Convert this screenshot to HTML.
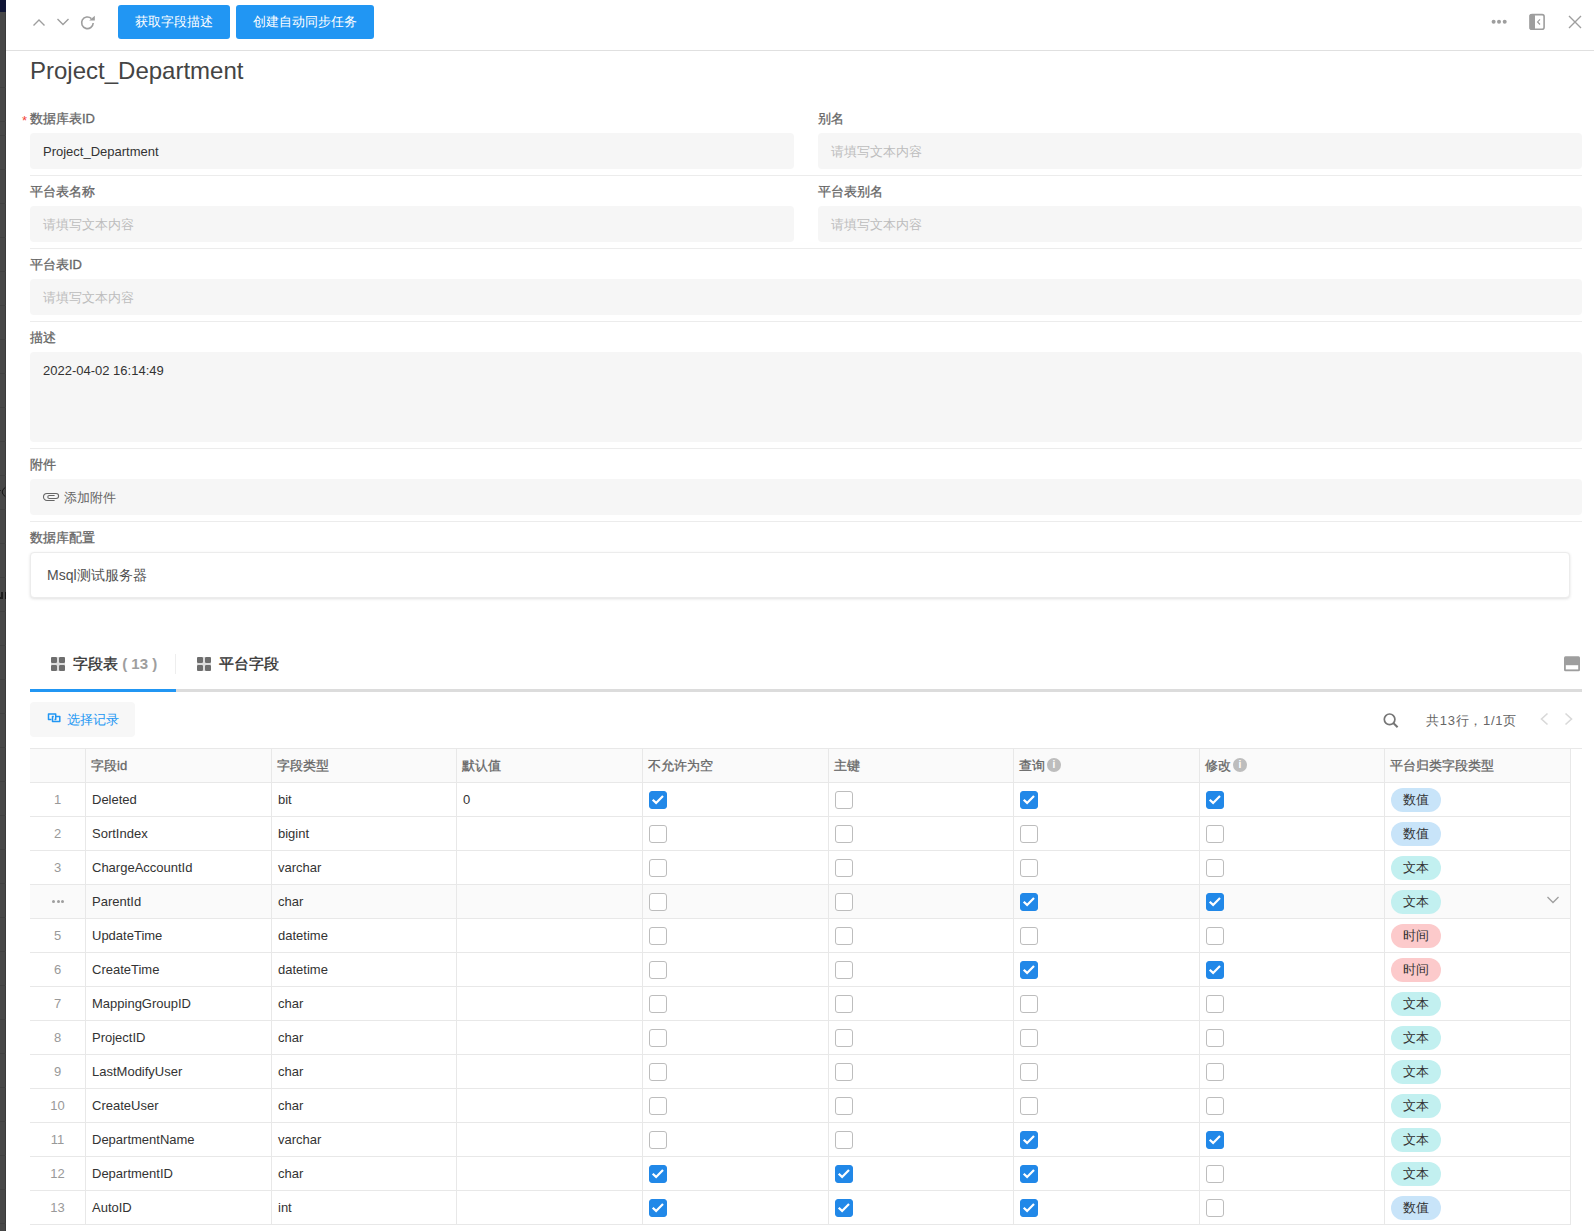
<!DOCTYPE html>
<html><head><meta charset="utf-8">
<style>
*{box-sizing:border-box;margin:0;padding:0}
html,body{width:1594px;height:1231px;overflow:hidden;background:#fff;font-family:"Liberation Sans",sans-serif;color:#333;position:relative}
.abs{position:absolute}
.strip{position:absolute;left:0;top:0;width:6px;height:1231px;background:#474747;border-right:1px solid #3a3a3a}
.strip .l{position:absolute;left:0;width:6px;height:1px;background:#404040}
.strip .nav{position:absolute;left:0;top:0;width:6px;height:12px;background:#0f1535}
.hline{position:absolute;left:6px;top:50px;width:1588px;height:1px;background:#e0e0e0}
.btn{position:absolute;top:5px;height:34px;background:#2196f3;border-radius:3px;color:#fff;font-size:13px;line-height:34px;text-align:center}
.title{position:absolute;left:30px;top:56px;font-size:24px;color:#444;line-height:30px}
.lbl{position:absolute;font-size:13px;font-weight:normal;color:#666;line-height:18px;-webkit-text-stroke:0.3px #666}
.req{color:#f44336;position:absolute;left:-8px;top:2px;font-weight:normal;-webkit-text-stroke:0}
.inp{position:absolute;height:36px;background:#f6f6f6;border-radius:4px;font-size:13px;line-height:36px;padding-left:13px;padding-top:1px;color:#333}
.ph{color:#bdbdbd}
.hr{position:absolute;height:1px;background:#ececec}
.sel{position:absolute;left:30px;top:552px;width:1540px;height:46px;background:#fff;border:1px solid #ececec;border-radius:4px;box-shadow:0 1px 3px rgba(0,0,0,0.12);font-size:14px;line-height:45px;padding-left:16px;color:#505050}
.tabs-line{position:absolute;left:30px;top:689px;width:1552px;height:3px;background:#dcdcdc}
.tabs-act{position:absolute;left:30px;top:689px;width:146px;height:3px;background:#2196f3}
.tab{position:absolute;top:654px;height:20px;font-size:15px;font-weight:normal;color:#333;line-height:20px;-webkit-text-stroke:0.35px #333}
.grid{position:absolute;width:14px;height:14px;background:linear-gradient(to right,transparent 6px,#ddd 6px,#ddd 8px,transparent 8px),linear-gradient(to bottom,transparent 6px,#ddd 6px,#ddd 8px,transparent 8px)}
.grid i{position:absolute;width:6px;height:6px;background:#6e6e6e;border-radius:1px}
.selbtn{position:absolute;left:30px;top:702px;width:105px;height:35px;background:#f7f7f7;border-radius:4px;color:#2196f3;font-size:13px;line-height:35px}
.pager{position:absolute;left:1426px;top:712px;font-size:13px;color:#666;line-height:18px;letter-spacing:0.7px}
.thead{position:absolute;left:30px;width:1540px;height:35px;background:#fafafa;border-top:1px solid #e8e8e8;border-bottom:1px solid #e8e8e8}
.th{position:absolute;height:34px;line-height:36px;font-size:13px;font-weight:normal;color:#666;-webkit-text-stroke:0.3px #666}
.info{display:inline-block;width:14px;height:14px;border-radius:50%;background:#bdbdbd;color:#fff;font-size:10px;line-height:14px;text-align:center;margin-left:2px;vertical-align:2px;font-weight:bold;-webkit-text-stroke:0}
.tr{position:absolute;left:30px;width:1540px;height:34px;border-bottom:1px solid #e8e8e8}
.tr.hov{background:#fafafa}
.tidx{position:absolute;left:30px;width:55px;height:34px;line-height:36px;text-align:center;font-size:13px;color:#999}
.td{position:absolute;height:34px;line-height:36px;font-size:13px;color:#333}
.vl{position:absolute;width:1px;background:#e8e8e8}
.cb{width:18px;height:18px;border:1px solid #bdbdbd;border-radius:3px;background:#fff}
.cb.on{background:#2188e8;border-color:#2188e8}
.cb svg{position:absolute;left:0;top:0}
.tag{position:absolute;width:50px;height:24px;border-radius:12px;text-align:center;line-height:24px;font-size:13px;color:#333}
.tag.num{background:#c8e4f9}
.tag.txt{background:#c2f0f0}
.tag.time{background:#fccacb}
.dots3 i{position:absolute;width:3px;height:3px;border-radius:50%;background:#9e9e9e;top:0}.dots3 i:nth-child(2){left:4.5px}.dots3 i:nth-child(3){left:9px}
.dots3{position:absolute;width:14px;height:3px}
</style></head><body>
<div class="strip"><div class="nav"></div><div class="l" style="top:87px"></div><div class="l" style="top:121px"></div><div class="l" style="top:135px"></div><div class="l" style="top:169px"></div><div class="l" style="top:203px"></div><div class="l" style="top:237px"></div><div class="l" style="top:271px"></div><div class="l" style="top:305px"></div><div class="l" style="top:339px"></div><div class="l" style="top:373px"></div><div class="l" style="top:407px"></div><div class="l" style="top:441px"></div><div class="l" style="top:475px"></div><div class="l" style="top:509px"></div><div class="l" style="top:543px"></div><div class="l" style="top:577px"></div><div class="l" style="top:611px"></div><div class="l" style="top:645px"></div><div class="l" style="top:679px"></div><div class="l" style="top:713px"></div><div class="l" style="top:747px"></div><div class="l" style="top:781px"></div><div class="l" style="top:815px"></div><div class="l" style="top:849px"></div><div class="l" style="top:883px"></div><div class="l" style="top:917px"></div><div class="l" style="top:951px"></div><div class="l" style="top:985px"></div><div class="l" style="top:1019px"></div><div class="l" style="top:1053px"></div><div class="l" style="top:1087px"></div><div class="l" style="top:1121px"></div><div class="l" style="top:1155px"></div><div class="l" style="top:1189px"></div><div class="l" style="top:1223px"></div></div>
<svg class="abs" style="left:0;top:480px" width="6" height="24" viewBox="0 0 6 24"><path d="M5.3 7.4 Q2.2 9.5 2.2 12 Q2.2 14.5 5.3 16.6" fill="none" stroke="#141414" stroke-width="1"/><path d="M0 10.5 H1" stroke="#222" stroke-width="1"/></svg>
<div class="abs" style="left:1px;top:592px;width:2px;height:7px;background:#1c1c1c"></div><div class="abs" style="left:0;top:597px;width:2px;height:2px;background:#1c1c1c"></div><div class="abs" style="left:5px;top:592px;width:1px;height:7px;background:#111"></div>
<div class="hline"></div>
<!-- header icons -->
<svg class="abs" style="left:31px;top:16px" width="16" height="12" viewBox="0 0 16 12"><path d="M2.5 9.5 L8 4 L13.5 9.5" fill="none" stroke="#9e9e9e" stroke-width="1.4"/></svg>
<svg class="abs" style="left:55px;top:16px" width="16" height="12" viewBox="0 0 16 12"><path d="M2.5 3 L8 8.5 L13.5 3" fill="none" stroke="#9e9e9e" stroke-width="1.4"/></svg>
<svg class="abs" style="left:80px;top:15px" width="16" height="16" viewBox="0 0 16 16"><path d="M13.2 8 A5.8 5.8 0 1 1 11.4 3.6" fill="none" stroke="#9e9e9e" stroke-width="1.6"/><path d="M9.2 5.6 L14.8 5.6 L14.8 0.8 Z" fill="#9e9e9e"/></svg>
<div class="btn" style="left:118px;width:112px">获取字段描述</div>
<div class="btn" style="left:236px;width:138px">创建自动同步任务</div>
<svg class="abs" style="left:1490px;top:18px" width="18" height="8" viewBox="0 0 18 8"><circle cx="3.6" cy="3.8" r="2" fill="#9e9e9e"/><circle cx="9" cy="3.8" r="2" fill="#9e9e9e"/><circle cx="14.7" cy="3.8" r="2" fill="#9e9e9e"/></svg>
<svg class="abs" style="left:1528px;top:13px" width="18" height="18" viewBox="0 0 18 18"><rect x="2.1" y="1.6" width="14" height="14.6" rx="2" fill="none" stroke="#9e9e9e" stroke-width="1.6"/><rect x="1.5" y="1" width="5.5" height="15.8" rx="1.5" fill="#9e9e9e"/><path d="M12 6.3 L9.6 8.9 L12 11.5" fill="none" stroke="#9e9e9e" stroke-width="1.2"/></svg>
<svg class="abs" style="left:1567px;top:14px" width="16" height="16" viewBox="0 0 16 16"><path d="M2 2 L14 14 M14 2 L2 14" fill="none" stroke="#9e9e9e" stroke-width="1.4"/></svg>

<div class="title">Project_Department</div>

<div class="lbl" style="left:30px;top:110px"><span class="req">*</span>数据库表ID</div>
<div class="inp" style="left:30px;top:133px;width:764px">Project_Department</div>
<div class="lbl" style="left:818px;top:110px">别名</div>
<div class="inp ph" style="left:818px;top:133px;width:764px">请填写文本内容</div>
<div class="hr" style="left:30px;top:175px;width:1552px"></div>

<div class="lbl" style="left:30px;top:183px">平台表名称</div>
<div class="inp ph" style="left:30px;top:206px;width:764px">请填写文本内容</div>
<div class="lbl" style="left:818px;top:183px">平台表别名</div>
<div class="inp ph" style="left:818px;top:206px;width:764px">请填写文本内容</div>
<div class="hr" style="left:30px;top:248px;width:1552px"></div>

<div class="lbl" style="left:30px;top:256px">平台表ID</div>
<div class="inp ph" style="left:30px;top:279px;width:1552px">请填写文本内容</div>
<div class="hr" style="left:30px;top:321px;width:1552px"></div>

<div class="lbl" style="left:30px;top:329px">描述</div>
<div class="inp" style="left:30px;top:352px;width:1552px;height:90px;line-height:18px;padding-top:10px">2022-04-02 16:14:49</div>
<div class="hr" style="left:30px;top:448px;width:1552px"></div>

<div class="lbl" style="left:30px;top:456px">附件</div>
<div class="inp" style="left:30px;top:479px;width:1552px;color:#666;padding-left:34px">添加附件</div>
<svg class="abs" style="left:38px;top:485px" width="24" height="20" viewBox="0 0 24 20"><path d="M16.6 15.5 H9 A3.5 3.5 0 0 1 9 8.5 H18.1 A2.5 2.5 0 0 1 18.1 13.5 H11.3 A1.5 1.5 0 0 1 11.3 10.5 H16.6" fill="none" stroke="#666" stroke-width="1.1"/></svg>
<div class="hr" style="left:30px;top:521px;width:1552px"></div>

<div class="lbl" style="left:30px;top:529px">数据库配置</div>
<div class="sel">Msql测试服务器</div>

<!-- tabs -->
<div class="grid" style="left:51px;top:657px"><i style="left:0;top:0"></i><i style="left:8px;top:0"></i><i style="left:0;top:8px"></i><i style="left:8px;top:8px"></i></div>
<div class="tab" style="left:73px">字段表 <span style="color:#9e9e9e;font-weight:bold;-webkit-text-stroke:0">( 13 )</span></div>
<div class="abs" style="left:175px;top:654px;width:1px;height:20px;background:#eee"></div>
<div class="grid" style="left:197px;top:657px"><i style="left:0;top:0"></i><i style="left:8px;top:0"></i><i style="left:0;top:8px"></i><i style="left:8px;top:8px"></i></div>
<div class="tab" style="left:219px">平台字段</div>
<svg class="abs" style="left:1563px;top:655px" width="18" height="17" viewBox="0 0 18 17"><rect x="1" y="1.2" width="16" height="15" rx="1.5" fill="#9e9e9e"/><rect x="2.8" y="10.2" width="12.4" height="4.2" fill="#fff"/></svg>
<div class="tabs-line"></div>
<div class="tabs-act"></div>

<div class="selbtn"><svg class="abs" style="left:16px;top:11px" width="16" height="14" viewBox="0 0 16 14"><path d="M5.5 6.6 H2.5 V1.1 H9.7 V3.6 M8.5 6.6 H9.7 V3.6" fill="none" stroke="#2196f3" stroke-width="1.5" stroke-linejoin="round"/><path d="M9.7 3.6 H13.8 V8.6 H6.5 V3.6 H7.8" fill="none" stroke="#2196f3" stroke-width="1.5" stroke-linejoin="round"/></svg><span class="abs" style="left:37px;top:0">选择记录</span></div>

<svg class="abs" style="left:1382px;top:712px" width="18" height="18" viewBox="0 0 18 18"><circle cx="7.6" cy="7.3" r="5.3" fill="none" stroke="#757575" stroke-width="1.7"/><path d="M11.3 11 L15.6 15.3" stroke="#757575" stroke-width="2"/></svg>
<div class="pager">共13行，1/1页</div>
<svg class="abs" style="left:1538px;top:712px" width="12" height="14" viewBox="0 0 12 14"><path d="M9.5 1.5 L3.5 7 L9.5 12.5" fill="none" stroke="#d9d9d9" stroke-width="1.6"/></svg>
<svg class="abs" style="left:1563px;top:712px" width="12" height="14" viewBox="0 0 12 14"><path d="M2.5 1.5 L8.5 7 L2.5 12.5" fill="none" stroke="#d9d9d9" stroke-width="1.6"/></svg>
<div class="abs" style="left:30px;top:748px;width:1552px;height:1px;background:#e8e8e8"></div>

<div class="thead" style="top:748px"></div>
<div class="th" style="left:91px;top:748px">字段id</div>
<div class="th" style="left:277px;top:748px">字段类型</div>
<div class="th" style="left:462px;top:748px">默认值</div>
<div class="th" style="left:648px;top:748px">不允许为空</div>
<div class="th" style="left:834px;top:748px">主键</div>
<div class="th" style="left:1019px;top:748px">查询<span class="info">i</span></div>
<div class="th" style="left:1205px;top:748px">修改<span class="info">i</span></div>
<div class="th" style="left:1390px;top:748px">平台归类字段类型</div>
<div class="tr" style="top:783px"></div>
<div class="tidx" style="top:782px">1</div>
<div class="td" style="left:92px;top:782px">Deleted</div>
<div class="td" style="left:278px;top:782px">bit</div>
<div class="td" style="left:463px;top:782px">0</div>
<div class="abs" style="left:649px;top:791px"><div class="cb on"><svg width="18" height="18" viewBox="0 0 18 18"><path d="M3.7 8.7 L7.1 11.9 L14 4.9" fill="none" stroke="#fff" stroke-width="2.2"/></svg></div></div>
<div class="abs" style="left:835px;top:791px"><div class="cb"></div></div>
<div class="abs" style="left:1020px;top:791px"><div class="cb on"><svg width="18" height="18" viewBox="0 0 18 18"><path d="M3.7 8.7 L7.1 11.9 L14 4.9" fill="none" stroke="#fff" stroke-width="2.2"/></svg></div></div>
<div class="abs" style="left:1206px;top:791px"><div class="cb on"><svg width="18" height="18" viewBox="0 0 18 18"><path d="M3.7 8.7 L7.1 11.9 L14 4.9" fill="none" stroke="#fff" stroke-width="2.2"/></svg></div></div>
<div class="tag num" style="left:1391px;top:788px">数值</div>
<div class="tr" style="top:817px"></div>
<div class="tidx" style="top:816px">2</div>
<div class="td" style="left:92px;top:816px">SortIndex</div>
<div class="td" style="left:278px;top:816px">bigint</div>
<div class="abs" style="left:649px;top:825px"><div class="cb"></div></div>
<div class="abs" style="left:835px;top:825px"><div class="cb"></div></div>
<div class="abs" style="left:1020px;top:825px"><div class="cb"></div></div>
<div class="abs" style="left:1206px;top:825px"><div class="cb"></div></div>
<div class="tag num" style="left:1391px;top:822px">数值</div>
<div class="tr" style="top:851px"></div>
<div class="tidx" style="top:850px">3</div>
<div class="td" style="left:92px;top:850px">ChargeAccountId</div>
<div class="td" style="left:278px;top:850px">varchar</div>
<div class="abs" style="left:649px;top:859px"><div class="cb"></div></div>
<div class="abs" style="left:835px;top:859px"><div class="cb"></div></div>
<div class="abs" style="left:1020px;top:859px"><div class="cb"></div></div>
<div class="abs" style="left:1206px;top:859px"><div class="cb"></div></div>
<div class="tag txt" style="left:1391px;top:856px">文本</div>
<div class="tr hov" style="top:885px"></div>
<div class="dots3" style="left:52px;top:900px"><i></i><i></i><i></i></div>
<div class="td" style="left:92px;top:884px">ParentId</div>
<div class="td" style="left:278px;top:884px">char</div>
<div class="abs" style="left:649px;top:893px"><div class="cb"></div></div>
<div class="abs" style="left:835px;top:893px"><div class="cb"></div></div>
<div class="abs" style="left:1020px;top:893px"><div class="cb on"><svg width="18" height="18" viewBox="0 0 18 18"><path d="M3.7 8.7 L7.1 11.9 L14 4.9" fill="none" stroke="#fff" stroke-width="2.2"/></svg></div></div>
<div class="abs" style="left:1206px;top:893px"><div class="cb on"><svg width="18" height="18" viewBox="0 0 18 18"><path d="M3.7 8.7 L7.1 11.9 L14 4.9" fill="none" stroke="#fff" stroke-width="2.2"/></svg></div></div>
<div class="tag txt" style="left:1391px;top:890px">文本</div>
<svg class="abs" style="left:1546px;top:895px" width="14" height="10" viewBox="0 0 14 10"><path d="M1.5 2 L7 7.5 L12.5 2" fill="none" stroke="#9e9e9e" stroke-width="1.3"/></svg>
<div class="tr" style="top:919px"></div>
<div class="tidx" style="top:918px">5</div>
<div class="td" style="left:92px;top:918px">UpdateTime</div>
<div class="td" style="left:278px;top:918px">datetime</div>
<div class="abs" style="left:649px;top:927px"><div class="cb"></div></div>
<div class="abs" style="left:835px;top:927px"><div class="cb"></div></div>
<div class="abs" style="left:1020px;top:927px"><div class="cb"></div></div>
<div class="abs" style="left:1206px;top:927px"><div class="cb"></div></div>
<div class="tag time" style="left:1391px;top:924px">时间</div>
<div class="tr" style="top:953px"></div>
<div class="tidx" style="top:952px">6</div>
<div class="td" style="left:92px;top:952px">CreateTime</div>
<div class="td" style="left:278px;top:952px">datetime</div>
<div class="abs" style="left:649px;top:961px"><div class="cb"></div></div>
<div class="abs" style="left:835px;top:961px"><div class="cb"></div></div>
<div class="abs" style="left:1020px;top:961px"><div class="cb on"><svg width="18" height="18" viewBox="0 0 18 18"><path d="M3.7 8.7 L7.1 11.9 L14 4.9" fill="none" stroke="#fff" stroke-width="2.2"/></svg></div></div>
<div class="abs" style="left:1206px;top:961px"><div class="cb on"><svg width="18" height="18" viewBox="0 0 18 18"><path d="M3.7 8.7 L7.1 11.9 L14 4.9" fill="none" stroke="#fff" stroke-width="2.2"/></svg></div></div>
<div class="tag time" style="left:1391px;top:958px">时间</div>
<div class="tr" style="top:987px"></div>
<div class="tidx" style="top:986px">7</div>
<div class="td" style="left:92px;top:986px">MappingGroupID</div>
<div class="td" style="left:278px;top:986px">char</div>
<div class="abs" style="left:649px;top:995px"><div class="cb"></div></div>
<div class="abs" style="left:835px;top:995px"><div class="cb"></div></div>
<div class="abs" style="left:1020px;top:995px"><div class="cb"></div></div>
<div class="abs" style="left:1206px;top:995px"><div class="cb"></div></div>
<div class="tag txt" style="left:1391px;top:992px">文本</div>
<div class="tr" style="top:1021px"></div>
<div class="tidx" style="top:1020px">8</div>
<div class="td" style="left:92px;top:1020px">ProjectID</div>
<div class="td" style="left:278px;top:1020px">char</div>
<div class="abs" style="left:649px;top:1029px"><div class="cb"></div></div>
<div class="abs" style="left:835px;top:1029px"><div class="cb"></div></div>
<div class="abs" style="left:1020px;top:1029px"><div class="cb"></div></div>
<div class="abs" style="left:1206px;top:1029px"><div class="cb"></div></div>
<div class="tag txt" style="left:1391px;top:1026px">文本</div>
<div class="tr" style="top:1055px"></div>
<div class="tidx" style="top:1054px">9</div>
<div class="td" style="left:92px;top:1054px">LastModifyUser</div>
<div class="td" style="left:278px;top:1054px">char</div>
<div class="abs" style="left:649px;top:1063px"><div class="cb"></div></div>
<div class="abs" style="left:835px;top:1063px"><div class="cb"></div></div>
<div class="abs" style="left:1020px;top:1063px"><div class="cb"></div></div>
<div class="abs" style="left:1206px;top:1063px"><div class="cb"></div></div>
<div class="tag txt" style="left:1391px;top:1060px">文本</div>
<div class="tr" style="top:1089px"></div>
<div class="tidx" style="top:1088px">10</div>
<div class="td" style="left:92px;top:1088px">CreateUser</div>
<div class="td" style="left:278px;top:1088px">char</div>
<div class="abs" style="left:649px;top:1097px"><div class="cb"></div></div>
<div class="abs" style="left:835px;top:1097px"><div class="cb"></div></div>
<div class="abs" style="left:1020px;top:1097px"><div class="cb"></div></div>
<div class="abs" style="left:1206px;top:1097px"><div class="cb"></div></div>
<div class="tag txt" style="left:1391px;top:1094px">文本</div>
<div class="tr" style="top:1123px"></div>
<div class="tidx" style="top:1122px">11</div>
<div class="td" style="left:92px;top:1122px">DepartmentName</div>
<div class="td" style="left:278px;top:1122px">varchar</div>
<div class="abs" style="left:649px;top:1131px"><div class="cb"></div></div>
<div class="abs" style="left:835px;top:1131px"><div class="cb"></div></div>
<div class="abs" style="left:1020px;top:1131px"><div class="cb on"><svg width="18" height="18" viewBox="0 0 18 18"><path d="M3.7 8.7 L7.1 11.9 L14 4.9" fill="none" stroke="#fff" stroke-width="2.2"/></svg></div></div>
<div class="abs" style="left:1206px;top:1131px"><div class="cb on"><svg width="18" height="18" viewBox="0 0 18 18"><path d="M3.7 8.7 L7.1 11.9 L14 4.9" fill="none" stroke="#fff" stroke-width="2.2"/></svg></div></div>
<div class="tag txt" style="left:1391px;top:1128px">文本</div>
<div class="tr" style="top:1157px"></div>
<div class="tidx" style="top:1156px">12</div>
<div class="td" style="left:92px;top:1156px">DepartmentID</div>
<div class="td" style="left:278px;top:1156px">char</div>
<div class="abs" style="left:649px;top:1165px"><div class="cb on"><svg width="18" height="18" viewBox="0 0 18 18"><path d="M3.7 8.7 L7.1 11.9 L14 4.9" fill="none" stroke="#fff" stroke-width="2.2"/></svg></div></div>
<div class="abs" style="left:835px;top:1165px"><div class="cb on"><svg width="18" height="18" viewBox="0 0 18 18"><path d="M3.7 8.7 L7.1 11.9 L14 4.9" fill="none" stroke="#fff" stroke-width="2.2"/></svg></div></div>
<div class="abs" style="left:1020px;top:1165px"><div class="cb on"><svg width="18" height="18" viewBox="0 0 18 18"><path d="M3.7 8.7 L7.1 11.9 L14 4.9" fill="none" stroke="#fff" stroke-width="2.2"/></svg></div></div>
<div class="abs" style="left:1206px;top:1165px"><div class="cb"></div></div>
<div class="tag txt" style="left:1391px;top:1162px">文本</div>
<div class="tr" style="top:1191px"></div>
<div class="tidx" style="top:1190px">13</div>
<div class="td" style="left:92px;top:1190px">AutoID</div>
<div class="td" style="left:278px;top:1190px">int</div>
<div class="abs" style="left:649px;top:1199px"><div class="cb on"><svg width="18" height="18" viewBox="0 0 18 18"><path d="M3.7 8.7 L7.1 11.9 L14 4.9" fill="none" stroke="#fff" stroke-width="2.2"/></svg></div></div>
<div class="abs" style="left:835px;top:1199px"><div class="cb on"><svg width="18" height="18" viewBox="0 0 18 18"><path d="M3.7 8.7 L7.1 11.9 L14 4.9" fill="none" stroke="#fff" stroke-width="2.2"/></svg></div></div>
<div class="abs" style="left:1020px;top:1199px"><div class="cb on"><svg width="18" height="18" viewBox="0 0 18 18"><path d="M3.7 8.7 L7.1 11.9 L14 4.9" fill="none" stroke="#fff" stroke-width="2.2"/></svg></div></div>
<div class="abs" style="left:1206px;top:1199px"><div class="cb"></div></div>
<div class="tag num" style="left:1391px;top:1196px">数值</div>
<div class="vl" style="left:85px;top:748px;height:477px"></div>
<div class="vl" style="left:271px;top:748px;height:477px"></div>
<div class="vl" style="left:456px;top:748px;height:477px"></div>
<div class="vl" style="left:642px;top:748px;height:477px"></div>
<div class="vl" style="left:828px;top:748px;height:477px"></div>
<div class="vl" style="left:1013px;top:748px;height:477px"></div>
<div class="vl" style="left:1199px;top:748px;height:477px"></div>
<div class="vl" style="left:1384px;top:748px;height:477px"></div>
<div class="vl" style="left:1570px;top:748px;height:477px"></div>
</body></html>
